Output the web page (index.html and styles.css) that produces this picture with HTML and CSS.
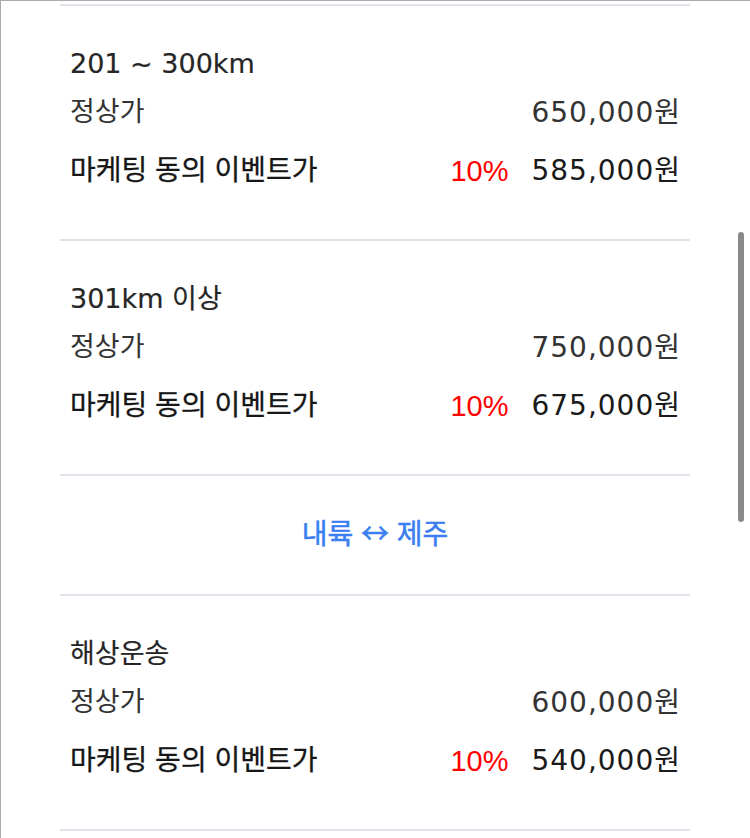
FILE: index.html
```html
<!DOCTYPE html>
<html lang="ko">
<head>
<meta charset="utf-8">
<title>요금표</title>
<link rel="stylesheet" href="styles.css">
</head>
<body>
<div class="frame">
  <div class="list">
    <section class="item">
      <h3 class="item-title">201 ~ 300km</h3>
      <div class="row">
        <span class="label">정상가</span>
        <span class="price">650,000원</span>
      </div>
      <div class="row event">
        <span class="label">마케팅 동의 이벤트가</span>
        <span class="right"><span class="rate">10%</span><span class="price">585,000원</span></span>
      </div>
    </section>
    <section class="item">
      <h3 class="item-title">301km 이상</h3>
      <div class="row">
        <span class="label">정상가</span>
        <span class="price">750,000원</span>
      </div>
      <div class="row event">
        <span class="label">마케팅 동의 이벤트가</span>
        <span class="right"><span class="rate">10%</span><span class="price">675,000원</span></span>
      </div>
    </section>
    <section class="group">
      <h2 class="group-title">내륙 ↔ 제주</h2>
    </section>
    <section class="item">
      <h3 class="item-title">해상운송</h3>
      <div class="row">
        <span class="label">정상가</span>
        <span class="price">600,000원</span>
      </div>
      <div class="row event">
        <span class="label">마케팅 동의 이벤트가</span>
        <span class="right"><span class="rate">10%</span><span class="price">540,000원</span></span>
      </div>
    </section>
    <div class="end"></div>
  </div>
  <div class="scrollbar"></div>
</div>
</body>
</html>
```
FILE: styles.css
```css
html, body {
  margin: 0;
  padding: 0;
  background: #ffffff;
}
body {
  font-family: "DejaVu Sans", "Noto Sans CJK KR", sans-serif;
  color: #333333;
}
.frame {
  position: relative;
  height: 837px;
  border-top: 1px solid #a9a9a9;
  border-left: 1px solid #a9a9a9;
  overflow: hidden;
}
.list {
  width: 630px;
  margin-left: 59px;
  padding-top: 3px;
}
.item, .group, .end {
  border-top: 2px solid #dfe3ea;
}
.item {
  padding: 38px 10px 51px 10px;
}
.item-title {
  margin: 0;
  font-size: 27px;
  font-weight: normal;
  line-height: 40px;
  color: #262626;
  -webkit-text-stroke: 0.2px #262626;
}
.row {
  display: flex;
  justify-content: space-between;
  align-items: center;
  height: 40px;
  margin-top: 6px;
}
.row.event {
  margin-top: 18px;
}
.label {
  font-family: "Noto Sans CJK KR", sans-serif;
  font-size: 27px;
  line-height: 40px;
  color: #333333;
}
.event .label {
  font-size: 28px;
  color: #161616;
  -webkit-text-stroke: 0.3px #161616;
}
.price {
  font-size: 28px;
  line-height: 40px;
  padding-top: 6px;
  letter-spacing: 1px;
  margin-right: -1px;
  color: #333333;
}
.event .price {
  color: #1a1a1a;
}
.right {
  display: flex;
  align-items: center;
  gap: 23px;
}
.rate {
  font-family: "Liberation Sans", "Noto Sans CJK KR", sans-serif;
  font-size: 29px;
  line-height: 40px;
  padding-top: 6px;
  color: #ff0000;
}
.group {
  padding: 36px 0 42px 0;
  text-align: center;
}
.group-title {
  margin: 0;
  font-family: "Noto Sans CJK KR", sans-serif;
  font-size: 28px;
  font-weight: normal;
  -webkit-text-stroke: 0.5px #3a7ef0;
  line-height: 40px;
  color: #3a7ef0;
}
.scrollbar {
  position: absolute;
  left: 737px;
  top: 231px;
  width: 6px;
  height: 290px;
  border-radius: 3px;
  background: #8a8a8a;
}
```
